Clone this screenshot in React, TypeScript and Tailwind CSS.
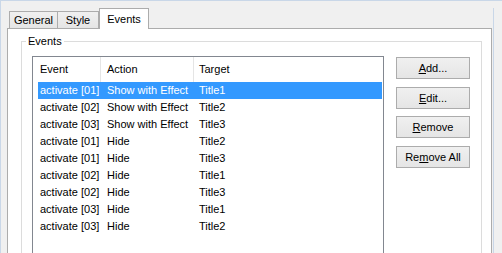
import React from 'react';

type Row = { event: string; action: string; target: string };

const rows: Row[] = [
    { event: 'activate [01]', action: 'Show with Effect', target: 'Title1' },
    { event: 'activate [02]', action: 'Show with Effect', target: 'Title2' },
    { event: 'activate [03]', action: 'Show with Effect', target: 'Title3' },
    { event: 'activate [01]', action: 'Hide', target: 'Title2' },
    { event: 'activate [01]', action: 'Hide', target: 'Title3' },
    { event: 'activate [02]', action: 'Hide', target: 'Title1' },
    { event: 'activate [02]', action: 'Hide', target: 'Title3' },
    { event: 'activate [03]', action: 'Hide', target: 'Title1' },
    { event: 'activate [03]', action: 'Hide', target: 'Title2' },
];

const DialogButton: React.FC<{ pre: string; key_: string; post: string; className?: string }> = ({ pre, key_, post, className }) => (
    <button
        type="button"
        className={`h-[22px] w-[74px] border border-[#acacac] bg-gradient-to-b from-[#f0f0f0] to-[#e5e5e5] text-[11px] leading-[20px] text-black ${className ?? ''}`}
    >
        {pre}
        <span className="underline">{key_}</span>
        {post}
    </button>
);

const App: React.FC = () => {
    const selected = 0;

    return (
        <div className="flex h-[253px] w-[502px] overflow-hidden border-l border-t border-[#c9d7e8] bg-[#f0f0f0] pl-[6px] pt-[7px] font-['Liberation_Sans',Arial,sans-serif] text-[11px] text-black">
            <div className="flex w-[485px] shrink-0 flex-col">
                {/* tab strip */}
                <div className="flex h-[20px] items-end pl-[2px]">
                    <div className="flex h-[17px] w-[48px] items-center justify-center border-l border-t border-[#acacac] bg-gradient-to-b from-[#f0f0f0] to-[#e5e5e5]">
                        General
                    </div>
                    <div className="flex h-[17px] w-[42px] items-center justify-center border-l border-r border-t border-[#acacac] bg-gradient-to-b from-[#f0f0f0] to-[#e5e5e5]">
                        Style
                    </div>
                    <div className="relative z-10 -mb-px flex h-[21px] w-[50px] items-start justify-center border-l border-r border-t border-[#acacac] bg-white pt-[2px]">
                        Events
                    </div>
                </div>

                {/* tab page */}
                <div className="flex-1 border border-[#acacac] bg-white pl-[13px] pr-[9px] pt-[6px]">
                    <fieldset className="h-[260px] border border-[#dcdcdc] px-[10px] pt-[8px]">
                        <legend className="-ml-[6px] px-[2px] leading-[13px]">Events</legend>
                        <div className="flex gap-[12px]">
                            <div className="h-[240px] w-[352px] border border-[#828790] bg-white">
                                <div className="flex h-[25px] items-center">
                                    <div className="h-full w-[68px] border-r border-[#e5e5e5] pl-[7px] leading-[25px]">Event</div>
                                    <div className="h-full w-[93px] border-r border-[#e5e5e5] pl-[6px] leading-[25px]">Action</div>
                                    <div className="h-full flex-1 pl-[5px] leading-[25px]">Target</div>
                                </div>
                                <div className="ml-[5px] mr-px flex flex-col">
                                    {rows.map((r, i) => (
                                        <div
                                            key={i}
                                            className={
                                                i === selected
                                                    ? 'grid h-[17px] grid-cols-[62px_92px_1fr] bg-[#3399ff] leading-[17px] text-white'
                                                    : 'grid h-[17px] grid-cols-[62px_92px_1fr] leading-[17px]'
                                            }
                                        >
                                            <span className="pl-[2px] whitespace-nowrap">{r.event}</span>
                                            <span className="pl-[7px] whitespace-nowrap">{r.action}</span>
                                            <span className="pl-[7px] whitespace-nowrap">{r.target}</span>
                                        </div>
                                    ))}
                                </div>
                            </div>
                            <div className="flex flex-col pt-px">
                                <DialogButton pre="" key_="A" post="dd..." />
                                <DialogButton pre="" key_="E" post="dit..." className="mt-[8px]" />
                                <DialogButton pre="" key_="R" post="emove" className="mt-[7px]" />
                                <DialogButton pre="Re" key_="m" post="ove All" className="mt-[8px]" />
                            </div>
                        </div>
                    </fieldset>
                </div>
            </div>
            <div className="ml-[1px] w-px shrink-0 bg-[#c9d7e8]" />
        </div>
    );
};

export default App;
